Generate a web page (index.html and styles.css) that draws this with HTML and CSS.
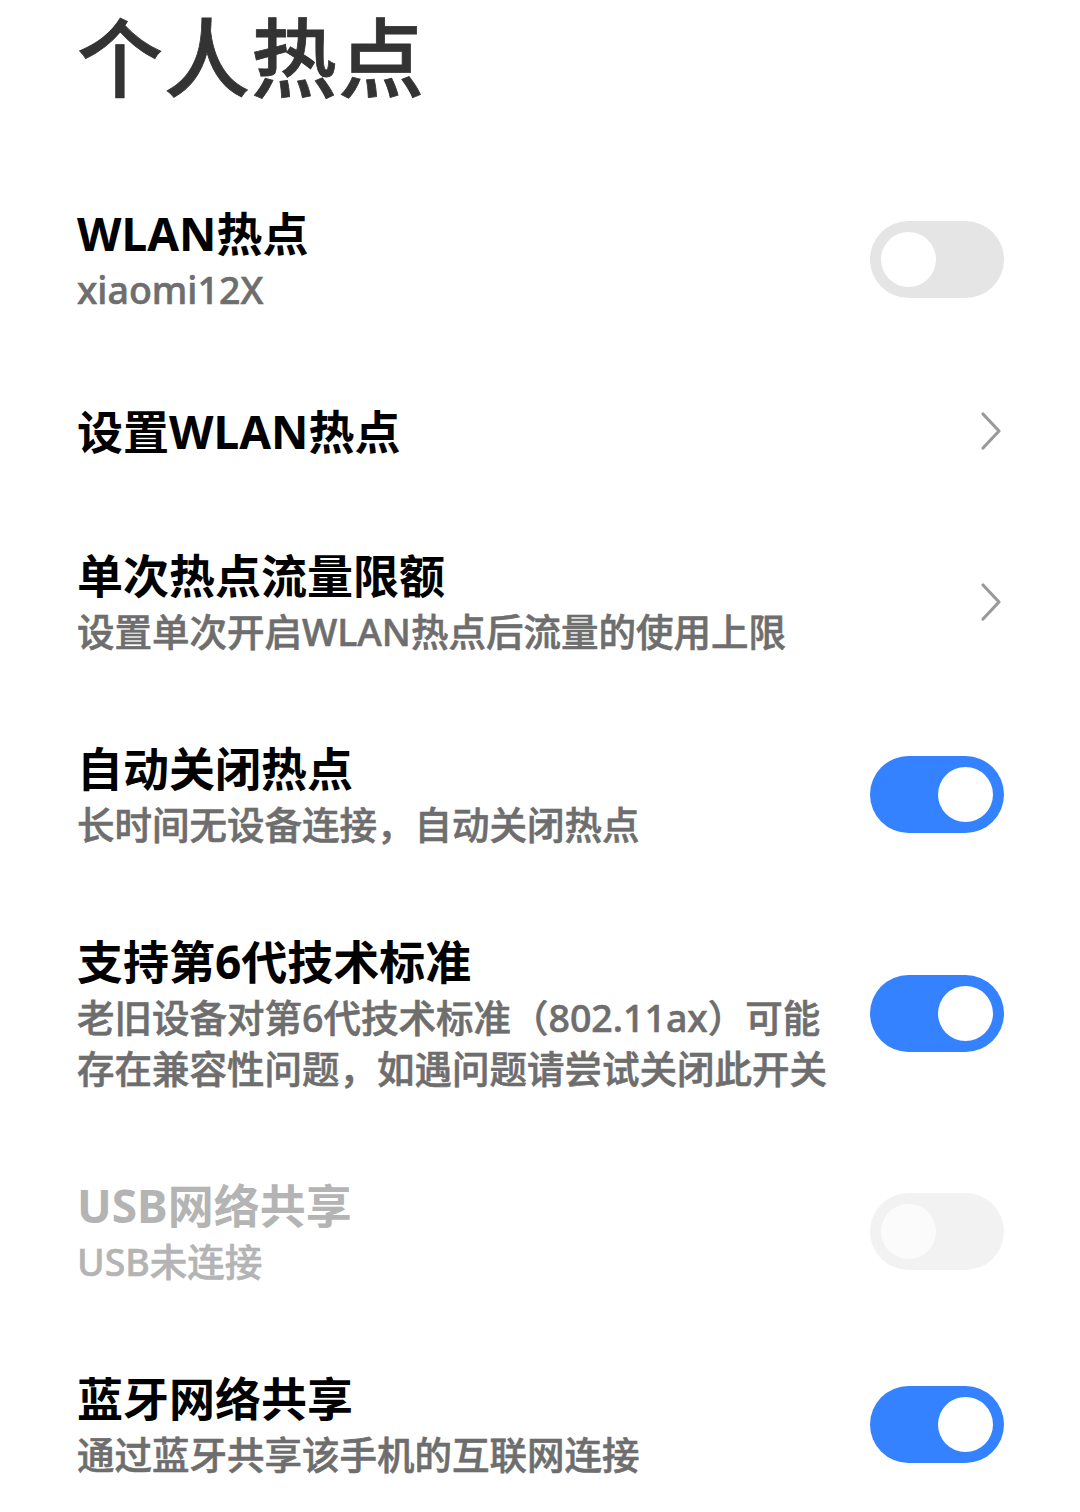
FILE: index.html
```html
<html>
<head>
<meta charset="utf-8">
<link rel="stylesheet" href="styles.css">
</head>
<body>
	<div id="page">
		<h1 class="page-title">个人热点</h1>

		<div class="row row-first">
			<div class="row-text">
				<div class="row-title">WLAN热点</div>
				<div class="row-sub">xiaomi12X</div>
			</div>
			<div class="switch"><div class="knob"></div></div>
		</div>

		<div class="row row-single">
			<div class="row-text">
				<div class="row-title">设置WLAN热点</div>
			</div>
			<svg class="chevron" width="22" height="40" viewBox="0 0 22 40"><path d="M3 3 L19 20 L3 37" fill="none" stroke="#9a9a9a" stroke-width="3.2" stroke-linecap="round" stroke-linejoin="round"/></svg>
		</div>

		<div class="row">
			<div class="row-text">
				<div class="row-title">单次热点流量限额</div>
				<div class="row-sub">设置单次开启WLAN热点后流量的使用上限</div>
			</div>
			<svg class="chevron" width="22" height="40" viewBox="0 0 22 40"><path d="M3 3 L19 20 L3 37" fill="none" stroke="#9a9a9a" stroke-width="3.2" stroke-linecap="round" stroke-linejoin="round"/></svg>
		</div>

		<div class="row">
			<div class="row-text">
				<div class="row-title">自动关闭热点</div>
				<div class="row-sub">长时间无设备连接，自动关闭热点</div>
			</div>
			<div class="switch on"><div class="knob"></div></div>
		</div>

		<div class="row">
			<div class="row-text">
				<div class="row-title">支持第6代技术标准</div>
				<div class="row-sub">老旧设备对第6代技术标准（802.11ax）可能<br>存在兼容性问题，如遇问题请尝试关闭此开关</div>
			</div>
			<div class="switch on"><div class="knob"></div></div>
		</div>

		<div class="row disabled">
			<div class="row-text">
				<div class="row-title">USB网络共享</div>
				<div class="row-sub">USB未连接</div>
			</div>
			<div class="switch"><div class="knob"></div></div>
		</div>

		<div class="row">
			<div class="row-text">
				<div class="row-title">蓝牙网络共享</div>
				<div class="row-sub">通过蓝牙共享该手机的互联网连接</div>
			</div>
			<div class="switch on"><div class="knob"></div></div>
		</div>
	</div>
</body>
</html>
```

FILE: styles.css
```css
body {
	margin: 0;
	background: #ffffff;
	font-family: "Noto Sans", "Noto Sans CJK SC", sans-serif;
}
#page {
	padding: 8px 76px 0 77px;
}
.page-title {
	margin: 0 0 48px 0;
	font-size: 86px;
	line-height: 100px;
	font-weight: 500;
	color: #333333;
	letter-spacing: 1px;
	-webkit-text-stroke: 0.8px #333333;
}
.row {
	display: flex;
	align-items: center;
	justify-content: space-between;
	padding: 41px 0 41px 0;
}
.row-first {
	padding-top: 48px;
	padding-bottom: 43px;
}
.row-single {
	padding: 44px 0 45px 0;
}
.row-text {
	display: flex;
	flex-direction: column;
}
.row-title {
	font-size: 46px;
	line-height: 58px;
	font-weight: 700;
	color: #000000;
}
.row-sub {
	margin-top: 2px;
	font-size: 37.5px;
	line-height: 51px;
	font-weight: 500;
	color: #6e6e6e;
	-webkit-text-stroke: 0.6px #6e6e6e;
}
.disabled .row-title,
.disabled .row-sub {
	color: #b4b4b4;
	-webkit-text-stroke-color: #b4b4b4;
}
.chevron {
	margin-right: 2px;
}
.switch {
	flex: none;
	width: 134px;
	height: 77px;
	border-radius: 39px;
	background: #e5e5e5;
	display: flex;
	align-items: center;
	padding: 0 11px;
	box-sizing: border-box;
}
.knob {
	width: 55px;
	height: 55px;
	border-radius: 50%;
	background: #ffffff;
}
.switch.on {
	background: #3482ff;
	justify-content: flex-end;
}
.disabled .switch {
	background: #f2f2f2;
}
.disabled .knob {
	background: #fbfbfb;
}
```
